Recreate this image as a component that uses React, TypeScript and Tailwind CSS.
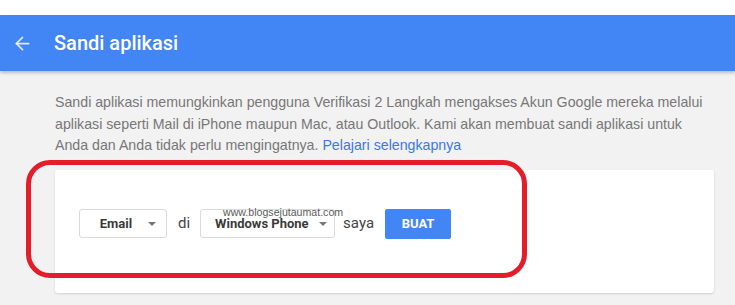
import { ArrowLeft } from 'lucide-react';

const SelectBox = ({ label, width }: { label: string; width: string }) => (
  <div className={`${width} h-[29px] flex items-center border border-[#dadada] rounded-[3px] bg-white pl-[14px] pr-[10px]`}>
    <span className="flex-1 pr-[10px] text-center text-[13px] font-bold text-[#3a3a3a] whitespace-nowrap">{label}</span>
    <span className="w-0 h-0 border-l-[4px] border-r-[4px] border-t-[4px] border-l-transparent border-r-transparent border-t-[#777]" />
  </div>
);

export default function App() {
  return (
    <div className="relative w-full h-[305px] overflow-hidden bg-[#f2f2f2] font-['Roboto',sans-serif]">
      <div className="h-[15px] bg-white" />
      <header className="h-[56px] bg-[#4285f4] flex items-center shadow-[0_2px_3px_rgba(0,0,0,0.22)] relative z-10">
        <ArrowLeft className="ml-[12px] text-white/80" size={21} strokeWidth={2} />
        <h1 className="ml-[21px] text-[20px] font-medium text-white">Sandi aplikasi</h1>
      </header>

      <main className="pl-[55px] pt-[21px]">
        <p className="text-[14.2px] leading-[21.5px] text-[#777] whitespace-nowrap font-['Liberation_Sans',Arial,sans-serif]">
          Sandi aplikasi memungkinkan pengguna Verifikasi 2 Langkah mengakses Akun Google mereka melalui
          <br />
          aplikasi seperti Mail di iPhone maupun Mac, atau Outlook. Kami akan membuat sandi aplikasi untuk
          <br />
          Anda dan Anda tidak perlu mengingatnya. <span className="text-[#3b78e7]">Pelajari selengkapnya</span>
        </p>

        <div className="mt-[13px] w-[659px] h-[123px] bg-white rounded-[3px] shadow-[0_1px_2px_rgba(0,0,0,0.15)] pt-[39px] pl-[24px]">
          <div className="flex items-center">
            <SelectBox label="Email" width="w-[88px]" />
            <span className="ml-[11px] text-[15px] text-[#444]">di</span>
            <div className="ml-[10px]">
              <SelectBox label="Windows Phone" width="w-[135px]" />
            </div>
            <span className="ml-[8px] text-[15px] text-[#444]">saya</span>
            <button className="ml-[11px] w-[66px] h-[30px] rounded-[2px] bg-[#4285f4] text-white text-[13px] font-bold">
              BUAT
            </button>
          </div>
        </div>
      </main>

      {/* watermark from the original screenshot, sits over the select */}
      <span className="absolute left-[223px] top-[207px] text-[10.6px] leading-none text-[#5a5a5a] font-['Liberation_Sans',Arial,sans-serif]">
        www.blogsejutaumat.com
      </span>

      <div className="absolute left-[26px] top-[160px] w-[501px] h-[118px] border-[5px] border-[#e31e2b] rounded-[24px] pointer-events-none" />
    </div>
  );
}
